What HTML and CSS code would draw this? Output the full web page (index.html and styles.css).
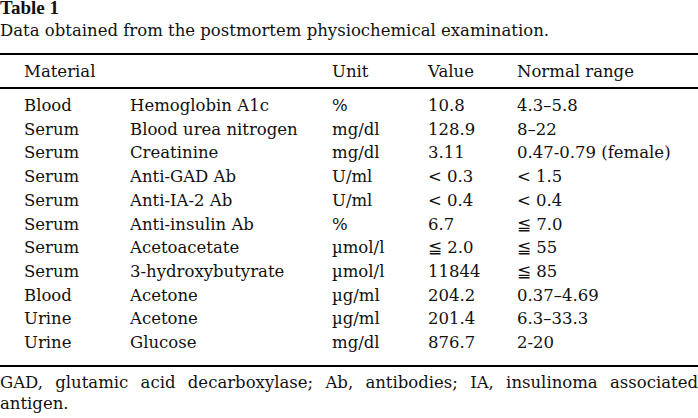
FILE: index.html
```html
<!DOCTYPE html>
<html>
<head>
<meta charset="utf-8">
<link rel="stylesheet" href="styles.css">
</head>
<body>
<div class="page">
  <div class="title">Table 1</div>
  <div class="caption">Data obtained from the postmortem physiochemical examination.</div>
  <table class="data">
    <thead>
      <tr><th>Material</th><th></th><th>Unit</th><th>Value</th><th>Normal range</th></tr>
    </thead>
    <tbody>
      <tr class="first"><td>Blood</td><td>Hemoglobin A1c</td><td>%</td><td>10.8</td><td>4.3–5.8</td></tr>
      <tr><td>Serum</td><td>Blood urea nitrogen</td><td>mg/dl</td><td>128.9</td><td>8–22</td></tr>
      <tr><td>Serum</td><td>Creatinine</td><td>mg/dl</td><td>3.11</td><td>0.47-0.79 (female)</td></tr>
      <tr><td>Serum</td><td>Anti-GAD Ab</td><td>U/ml</td><td>&lt; 0.3</td><td>&lt; 1.5</td></tr>
      <tr><td>Serum</td><td>Anti-IA-2 Ab</td><td>U/ml</td><td>&lt; 0.4</td><td>&lt; 0.4</td></tr>
      <tr><td>Serum</td><td>Anti-insulin Ab</td><td>%</td><td>6.7</td><td>≦ 7.0</td></tr>
      <tr><td>Serum</td><td>Acetoacetate</td><td>µmol/l</td><td>≦ 2.0</td><td>≦ 55</td></tr>
      <tr><td>Serum</td><td>3-hydroxybutyrate</td><td>µmol/l</td><td>11844</td><td>≦ 85</td></tr>
      <tr><td>Blood</td><td>Acetone</td><td>µg/ml</td><td>204.2</td><td>0.37–4.69</td></tr>
      <tr><td>Urine</td><td>Acetone</td><td>µg/ml</td><td>201.4</td><td>6.3–33.3</td></tr>
      <tr class="last"><td>Urine</td><td>Glucose</td><td>mg/dl</td><td>876.7</td><td>2-20</td></tr>
    </tbody>
  </table>
  <p class="note">GAD, glutamic acid decarboxylase; Ab, antibodies; IA, insulinoma associated antigen.</p>
</div>
</body>
</html>
```
FILE: styles.css
```css
html, body {
  margin: 0;
  padding: 0;
  background: #fff;
}
.page {
  width: 698px;
  font-family: "DejaVu Serif", serif;
  font-size: 16.5px;
  color: #111;
}
.title {
  font-family: "Liberation Serif", serif;
  font-weight: bold;
  font-size: 19px;
  line-height: 16px;
}
.caption {
  line-height: 24px;
  margin-top: 3px;
}
.data {
  width: 698px;
  border-collapse: collapse;
  margin-top: 10px;
  border-top: 2px solid #000;
  border-bottom: 2px solid #000;
  table-layout: fixed;
}
.data th, .data td {
  text-align: left;
  font-weight: normal;
  padding: 0;
  white-space: nowrap;
}
.data th {
  height: 32px;
  border-bottom: 2px solid #000;
}
.data td {
  line-height: 23.7px;
}
.data th:nth-child(1), .data td:nth-child(1) { width: 106px; padding-left: 24px; }
.data th:nth-child(2), .data td:nth-child(2) { width: 202px; }
.data th:nth-child(3), .data td:nth-child(3) { width: 96px; }
.data th:nth-child(4), .data td:nth-child(4) { width: 89px; }
.data tr.first td { padding-top: 5px; }
.data tr.last td { padding-bottom: 10px; }
.note {
  margin: 5px 0 0;
  line-height: 21px;
  text-align: justify;
}
```
